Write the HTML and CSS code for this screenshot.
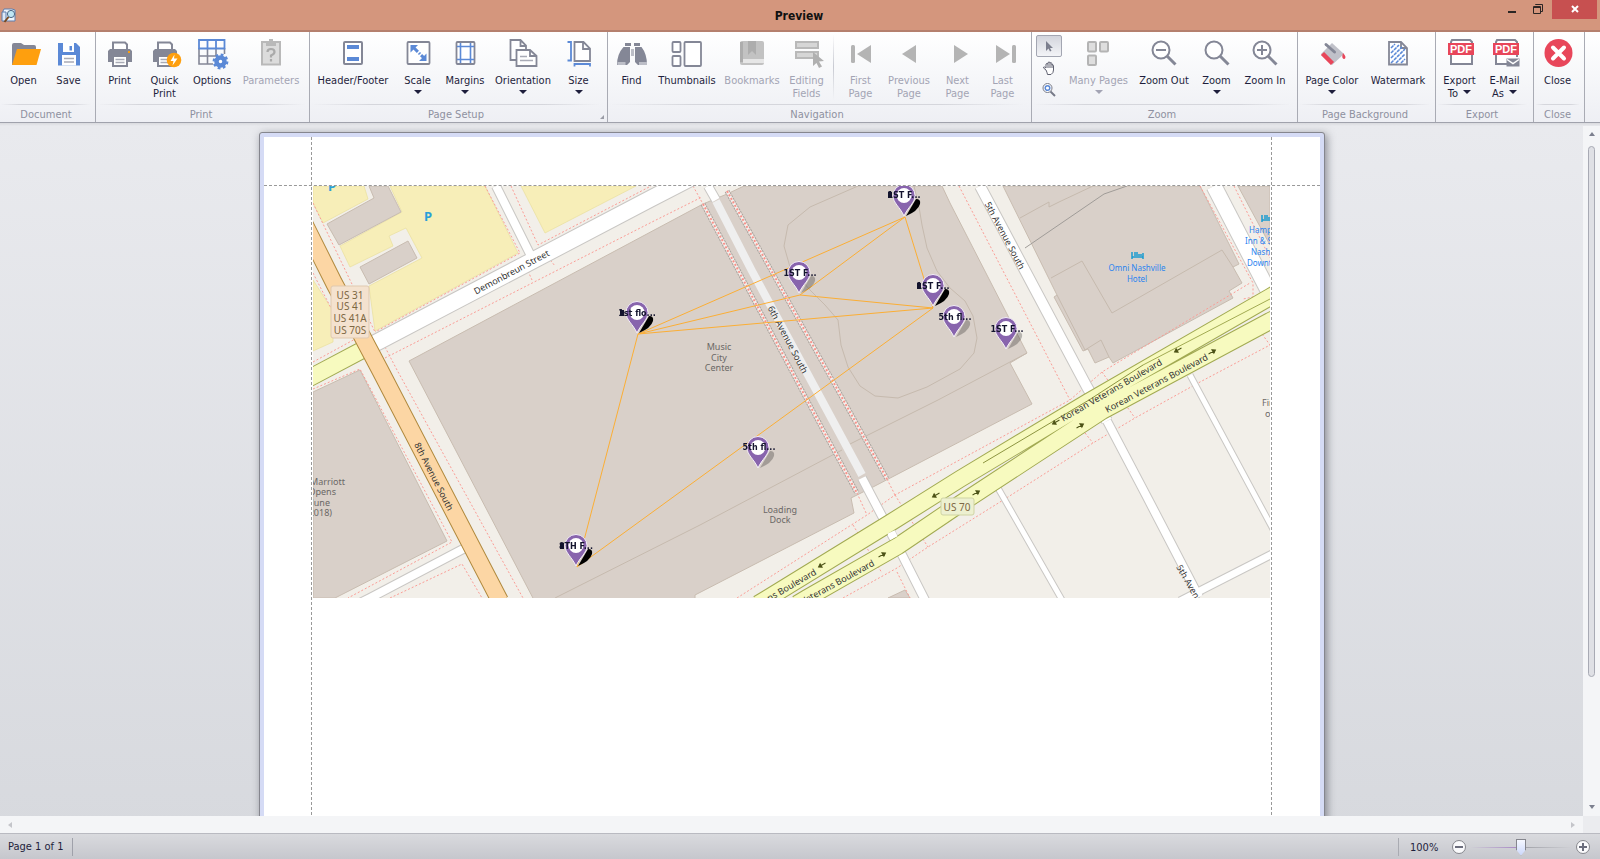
FILE: index.html
```html
<!DOCTYPE html>
<html lang="en">
<head>
<meta charset="utf-8">
<title>Preview</title>
<link rel="stylesheet" href="styles.css">
</head>
<body>
<div class="window">
<header class="titlebar">
  <svg class="app-icon" viewBox="0 0 16 16" aria-hidden="true"><path d="M3 1h8l3 1v11H2V3z" fill="#eef4fb" stroke="#5e7fae"/><path d="M1 4h4v9H1z" fill="#dfe9f6" stroke="#5e7fae"/><circle cx="10" cy="6" r="3.6" fill="#bfe6f4" stroke="#4a6685"/><path d="M7.5 9 3.5 14" stroke="#7a4a1e" stroke-width="2"/></svg>
  <h1 class="title">Preview</h1>
  <div class="window-buttons">
    <button class="wbtn" aria-label="Minimize"><svg viewBox="0 0 10 14"><path d="M1 12h8" stroke="#2b2624" stroke-width="2"/></svg></button>
    <button class="wbtn restore" aria-label="Restore"><svg viewBox="0 0 10 14"><path d="M2.500 5V4.500h7v7H8M.5 6.500h7v7h-7zM.5 7.500h7" fill="none" stroke="#2b2624"/></svg></button>
    <button class="wbtn wclose" aria-label="Close window"><svg viewBox="0 0 10 14"><path d="m2 6 6 6m0-6-6 6" stroke="#fff" stroke-width="2"/></svg></button>
  </div>
</header>

<nav class="ribbon" aria-label="Ribbon">
  <section class="group">
    <div class="tools">
      <button class="tool"><svg viewBox="0 0 32 32"><path d="M4 28V8q0-2 2-2h7l3 2h10q2 0 2 2v18z" fill="#848796"/><path d="M4 28 9 12h24l-4.500 16z" fill="#fe9f0e"/></svg><span>Open</span></button>
      <button class="tool"><svg viewBox="0 0 32 32"><path d="M5 6h18l4 4v18.500H5z" fill="#5b89d6"/><path d="M10 6h11v9H10zM9 18h14v10.500H9z" fill="#fff"/><path d="M16.500 9h2.500v4.500h-2.500z" fill="#5b89d6"/><path d="M11 21.500h10M11 25h10" stroke="#a9abb6" stroke-width="1.500"/></svg><span>Save</span></button>
    </div>
    <h2 class="caption">Document</h2>
  </section>
  <section class="group">
    <div class="tools">
      <button class="tool"><svg viewBox="0 0 32 32"><path d="M6 12h20l2 2v11H4V14z" fill="#848796"/><path d="M9 13V5.500h12l2 2V13zM9 19h14v10H9z" fill="#fff" stroke="#848796" stroke-width="2"/><path d="M11.500 22.500h9M11.500 25.500h9" stroke="#a9abb6" stroke-width="1.300"/><path d="M24 14h2v2h-2z" fill="#fe9f0e"/></svg><span>Print</span></button>
      <button class="tool"><svg viewBox="0 0 32 32"><path d="M6 12h20l2 2v11H4V14z" fill="#848796"/><path d="M9 13V5.500h12l2 2V13zM9 19h14v10H9z" fill="#fff" stroke="#848796" stroke-width="2"/><path d="M11.500 22.500h9M11.500 25.500h9" stroke="#a9abb6" stroke-width="1.300"/><circle cx="25" cy="23" r="7.300" fill="#fe9f0e"/><path d="m25.500 17.500-4 6.500h3l-1 4.500 5-7h-3.500z" fill="#fff"/></svg><span>Quick<br>Print</span></button>
      <button class="tool w50"><svg viewBox="0 0 32 32"><path d="M3 11v16h14M3 19h19M11.500 11v16M20 11v8M28.500 11v6" fill="none" stroke="#848796" stroke-width="1.600"/><path d="M3 3h25.500v8.500H3zM11.500 3v8M20 3v8" fill="none" stroke="#5b89d6" stroke-width="1.800"/><circle cx="24.500" cy="24.500" r="4" fill="#fff" stroke="#5b89d6" stroke-width="4.500"/><circle cx="24.500" cy="24.500" r="6.800" fill="none" stroke="#5b89d6" stroke-width="2.200" stroke-dasharray="2.800 2.540"/></svg><span>Options</span></button>
      <button class="tool w68" disabled><svg viewBox="0 0 32 32"><path d="M7 5h18v22.500H7z" fill="#dcdcdc" stroke="#b9b9b9" stroke-width="2"/><path d="M11 4h3V2h4v2h3v5H11z" fill="#b9b9b9"/><path d="M12.500 15q0-3 3.500-3t3.500 3q0 2-3.500 3.500v2M16 22v2.500" fill="none" stroke="#aaa" stroke-width="2.200"/></svg><span>Parameters</span></button>
    </div>
    <h2 class="caption">Print</h2>
  </section>
  <section class="group roomy">
    <div class="tools">
      <button class="tool w84"><svg viewBox="0 0 32 32"><rect x="7" y="5" width="18" height="22" rx="1" fill="#fff" stroke="#848796" stroke-width="2"/><path d="M10 10h12M10 22h12" stroke="#5b89d6" stroke-width="4"/></svg><span>Header/Footer</span></button>
      <button class="tool"><svg viewBox="0 0 32 32"><rect x="5.500" y="5" width="22" height="22" rx="1" fill="#fff" stroke="#848796" stroke-width="1.800"/><path d="m12 11 10 10" stroke="#5b89d6" stroke-width="3" stroke-dasharray="5.500 1.500 1.500 1.500 6"/><path d="M8.500 8h7.500l-7.500 7.500zM24.500 24H17l7.500-7.500z" fill="#5b89d6"/></svg><span>Scale</span><i class="arrow"></i></button>
      <button class="tool w50"><svg viewBox="0 0 32 32"><rect x="7.500" y="5" width="18" height="22" rx="1" fill="#fff" stroke="#848796" stroke-width="1.800"/><path d="M11.500 6v20M21.500 6v20M8 9.500h17M8 22.500h17" stroke="#5b89d6" stroke-width="1.600"/></svg><span>Margins</span><i class="arrow"></i></button>
      <button class="tool w66"><svg viewBox="0 0 32 32"><path d="M3.500 3h10l5.500 5.500V23H3.500zM13.500 3v6H19" fill="#fff" stroke="#848796" stroke-width="1.800"/><path d="M9.500 13h13.500l6.500 6v10h-20zM23 13v6h6" fill="#fff" stroke="#848796" stroke-width="1.800"/><path d="M13 19.500h7M13 23.500h13" stroke="#a9abb6" stroke-width="1.500"/></svg><span>Orientation</span><i class="arrow"></i></button>
      <button class="tool"><svg viewBox="0 0 32 32"><path d="M11.500 5h9l6.500 6.500V24H11.500zM20 5v7h7" fill="#fff" stroke="#848796" stroke-width="1.800"/><path d="M4.500 5H8v18.500H4.500M11.500 29.500V27H27v2.500" fill="none" stroke="#5b89d6" stroke-width="1.800"/></svg><span>Size</span><i class="arrow"></i></button>
    </div>
    <h2 class="caption">Page Setup</h2>
    <i class="launcher"></i>
  </section>
  <section class="group roomy">
    <div class="tools">
      <button class="tool"><svg viewBox="0 0 32 32"><path d="M9 6h6v3H9zM18 6h6v3h-6z" fill="#848796"/><path d="M7.500 10h6.500v15l-3 3H1q0-11 6.500-18zM19 10h6.500Q31 17 31 28H22l-3-3z" fill="#848796"/><path d="M15 12h3v7h-3zM1.500 25h8v3h-8zM23 25h8v3h-8z" fill="#bcbec7"/></svg><span>Find</span></button>
      <button class="tool w66"><svg viewBox="0 0 32 32"><g fill="#fff" stroke="#848796" stroke-width="1.800"><rect x="1.500" y="5" width="8" height="10" rx="1"/><rect x="1.500" y="19" width="8" height="10" rx="1"/><rect x="13.500" y="5" width="16.500" height="24" rx="1"/></g></svg><span>Thumbnails</span></button>
      <button class="tool w64" disabled><svg viewBox="0 0 32 32"><rect x="4" y="4" width="24" height="24" rx="2" fill="#c2c2c2"/><path d="M4 5h3v20H4zM12 4h8v14l-4-4-4 4z" fill="#adadad"/><path d="M7 22h21v4H7z" fill="#e6e6e6"/></svg><span>Bookmarks</span></button>
      <button class="tool" disabled><svg viewBox="0 0 32 32"><path d="M5 5h22v6H5zM5 15h22v6H5z" fill="#d6d6d6" stroke="#b9b9b9" stroke-width="2"/><path d="m22 15 11 9-5 .5 3 5-3 1.500-2.500-5-3.500 3z" fill="#b0b0b0"/></svg><span>Editing<br>Fields</span></button>
      <i class="divider"></i>
      <button class="tool" disabled><svg viewBox="0 0 32 32"><rect x="6" y="8" width="4" height="18" rx="1.500" fill="#b4b4b4"/><path d="M26 8v18L12 17z" fill="#b4b4b4"/></svg><span>First<br>Page</span></button>
      <button class="tool w52" disabled><svg viewBox="0 0 32 32"><path d="M23 8v18L9 17z" fill="#b4b4b4"/></svg><span>Previous<br>Page</span></button>
      <button class="tool" disabled><svg viewBox="0 0 32 32"><path d="M12 8v18l14-9z" fill="#b4b4b4"/></svg><span>Next<br>Page</span></button>
      <button class="tool" disabled><svg viewBox="0 0 32 32"><rect x="25" y="8" width="4" height="18" rx="1.500" fill="#b4b4b4"/><path d="M9 8v18l14-9z" fill="#b4b4b4"/></svg><span>Last<br>Page</span></button>
    </div>
    <h2 class="caption">Navigation</h2>
  </section>
  <section class="group roomy">
    <div class="tools">
      <div class="modes">
        <button class="mode active" aria-label="Pointer"><svg viewBox="0 0 16 16"><path d="M5 3v10l2.500-2.500 1.500 3 1.500-.7-1.500-2.800h3z" fill="#7c7f8e"/></svg></button>
        <button class="mode" aria-label="Hand tool"><svg viewBox="0 0 16 16"><path d="M5 10 2.500 8Q2 7 3.500 7L5 8V4q1-1 2 0V2.500q1-1 2 0V3q1-1 2 .5V5q1.500-.5 1.500.5V10q0 3-2.500 4.500H6.500Q6 12 5 10zM7 4v4M9 3v5M11 4v4" fill="#fff" stroke="#5f6170"/></svg></button>
        <button class="mode" aria-label="Magnifier"><svg viewBox="0 0 16 16"><circle cx="6.500" cy="6" r="4.500" fill="#fff" stroke="#777a88"/><circle cx="6.500" cy="6" r="2.300" fill="none" stroke="#5b89d6" stroke-width="1.500"/><path d="m9.500 9.500 4.500 4.500" stroke="#777a88" stroke-width="2"/></svg></button>
      </div>
      <button class="tool w71" disabled><svg viewBox="0 0 32 32"><g fill="#dedede" stroke="#b4b4b4" stroke-width="2"><rect x="5" y="5" width="8" height="9.500" rx="1"/><rect x="17" y="5" width="8" height="9.500" rx="1"/><rect x="5" y="18.500" width="8" height="9.500" rx="1"/></g></svg><span>Many Pages</span><i class="arrow"></i></button>
      <button class="tool w60"><svg viewBox="0 0 32 32"><circle cx="13" cy="13" r="8.500" fill="#fff" stroke="#848796" stroke-width="2"/><path d="m19 19 8.500 8.500" stroke="#848796" stroke-width="3"/><path d="M8 13h10" stroke="#848796" stroke-width="2"/></svg><span>Zoom Out</span></button>
      <button class="tool"><svg viewBox="0 0 32 32"><circle cx="13" cy="13" r="8.500" fill="#fff" stroke="#848796" stroke-width="2"/><path d="m19 19 8.500 8.500" stroke="#848796" stroke-width="3"/></svg><span>Zoom</span><i class="arrow"></i></button>
      <button class="tool w52"><svg viewBox="0 0 32 32"><circle cx="13" cy="13" r="8.500" fill="#fff" stroke="#848796" stroke-width="2"/><path d="m19 19 8.500 8.500" stroke="#848796" stroke-width="3"/><path d="M8 13h10M13 8v10" stroke="#848796" stroke-width="2"/></svg><span>Zoom In</span></button>
    </div>
    <h2 class="caption">Zoom</h2>
  </section>
  <section class="group">
    <div class="tools">
      <button class="tool w66"><svg viewBox="0 0 32 32"><path d="m16 6 12 11-12 11L5 17z" fill="#c0c1c9"/><path d="m6.500 16.500 10 10" stroke="#e8465a" stroke-width="4.500"/><path d="m10 7.500 8.500 7.500" stroke="#848796" stroke-width="3" stroke-linecap="round"/><path d="M27 16q4 4 1.500 6-3.500 0-1.500-6z" fill="#e8465a"/></svg><span>Page Color</span><i class="arrow"></i></button>
      <button class="tool w66"><svg viewBox="0 0 32 32"><path d="M7 5h12l6 6v16.500H7zM19 5v6h6" fill="#fff" stroke="#848796" stroke-width="1.800"/><path d="m9 11 4-4M9 16l8-8M9 21 20 10M9 26l14-14M14 26l9-9M19 26l4-4" stroke="#5b89d6" stroke-width="1.600" stroke-dasharray="3.500 .8"/></svg><span>Watermark</span></button>
    </div>
    <h2 class="caption">Page Background</h2>
  </section>
  <section class="group roomy">
    <div class="tools">
      <button class="tool"><svg viewBox="0 0 32 32"><path d="M8 3h18l2 2v22H7V5z" fill="#fff" stroke="#848796" stroke-width="2"/><path d="M4 6h26v12H4z" fill="#e8465a"/><text x="17" y="15.500" class="pdf">PDF</text></svg><span>Export<br>To <i class="arrow side"></i></span></button>
      <button class="tool"><svg viewBox="0 0 32 32"><path d="M18 27H7V5l1-2h18l2 2v15" fill="#fff" stroke="#848796" stroke-width="2"/><path d="M4 6h26v12H4z" fill="#e8465a"/><text x="17" y="15.500" class="pdf">PDF</text><path d="M17.500 21.500h13v8h-13z" fill="#848796"/><path d="m18 22.500 6 4 6-4" fill="none" stroke="#fff" stroke-width="1.500"/></svg><span>E-Mail<br>As <i class="arrow side"></i></span></button>
    </div>
    <h2 class="caption">Export</h2>
  </section>
  <section class="group">
    <div class="tools">
      <button class="tool"><svg viewBox="0 0 32 32"><circle cx="16.500" cy="16" r="14" fill="#e8465a"/><path d="m11 10.500 11 11m0-11-11 11" stroke="#fff" stroke-width="4" stroke-linecap="round"/></svg><span>Close</span></button>
    </div>
    <h2 class="caption">Close</h2>
  </section>
</nav>

<main class="workspace">
  <div class="canvas">
    <article class="sheet">
      <i class="margin-line left"></i><i class="margin-line right"></i><i class="margin-line top"></i>
      <svg class="map" viewBox="313 186 957 412" role="img" aria-label="Map of downtown Nashville">
        <defs>
          <g id="pin"><path d="M0 0C-4-9-11-13-11-20.500a11 11 0 0 1 22 0C11-13 4-9 0 0z" fill="#8864ad" stroke="#f4eff8"/><circle cy="-20.500" r="7.500" fill="#fff"/></g>
          <path id="shade" d="M2 0 12-17q5 0 4 5Q14-5 2 0z"/>
          <path id="way" d="M-4 0h8M4 0 1-2v4z" fill="#4c5216" stroke="#4c5216"/>
        </defs>
        <path d="M313 186h957v412H313z" fill="#f2efe9"/>
        <g fill="#f7eeb8" stroke="#eadf9c" stroke-width=".7">
          <path d="M313 186h51l4 13-45 24-10-20zM390 186h95l33 67-143 78-6-45 53-28-16-30-17 8 4 10-43 21-10-21 62-34zM313 280l20 31v31l-20 9zM521 186h115l-91 47z"/>
        </g>
        <g class="building">
          <path d="M327 224l47-26-5-12h19l13 26-62 33zM360 267l48-26 9 17-48 26z"/>
          <path d="M409 361l294-157 24-10 17-8h198l8 17 77 150-17 10 22 41-159 83-22 11 3 15-159 82v5H534z"/>
          <path d="M1003 186l54 109-3 2 29 54 5-2 7 14 14-6 4 6 120-65-4-7 13-8-9-16 6-3-39-78zM1238 186h32v59zM313 392l47-22 87 171-112 57h-22zM888 598l17-8 5 8z"/>
        </g>
        <g class="inner">
          <path d="M555 598l145-73 142-75M850 444l88-44 89-47M1051 278l31-17 30 52 110-63 11 17M1020 218l29-16v5l10-5 34-16M1057 295l28 55 16-10 8 17"/>
          <path d="M858 186l-48 21-22 18-4 21 6 21 20 23 15 15 13 15 3 25 7 22 12 19 15 10 23 2 29-11 33-18 14-16 3-15-4-22-8-15-15-13-13-17-10-23-5-23-3-18-5-21"/>
          <path d="M1025 248l79-54 23-8" class="wire"/>
        </g>
        <g class="walk">
          <path d="M313 203l62 129M313 273l18 35M485 186l35 67-145 79M511 186l27 59 113-59M385 358l267-136 50-25M693 186l10 18M313 362l44-24M385 347l12 23 126 228M313 389l47-20 92 173-104 56M390 598l72-34 20 34M528 271l4 9M548 257l7 9"/>
          <path d="M959 186l111 214M737 598l130-83 28-20 175-95 32-28 148-89M1200 186l53 97v14l-10 2M1234 186l36 72M843 598l54-30 31-21 80-50 85-54 42-25 65-36 70-37-13-18M853 525l29 48M895 495l33 52M897 572l13 26M1102 372l33 46M857 493l10 22M887 479l8 16M1085 433l8 10"/>
        </g>
        <g class="tunnel">
          <path class="edge" d="M703 204l120 226 34 63M727 191l133 239 27 49"/>
          <path class="bed" d="M703 204l120 226 34 63M727 191l133 239 27 49"/>
          <path class="dots" d="M703 204l120 226 34 63M727 191l133 239 27 49"/>
        </g>
        <g class="road casing">
          <path d="M366 348l284-149 60-31" stroke-width="18"/><path d="M496 186l34 68M465 548l-95 50-20 10" stroke-width="10"/>
          <path d="M1214 186l56 108" stroke-width="17"/><path d="M980 186l107 201 20 34" stroke-width="12"/><path d="M1107 421l40 76 52 100" stroke-width="10"/>
          <path d="M1190 375l84 156M998 488l64 112" stroke-width="7"/><path d="M1180 601l100-51" stroke-width="9"/><path d="M708 186l8 14M862 478l31 59 34 67" stroke-width="10"/>
        </g>
        <g class="road white">
          <path d="M366 348l284-149 60-31" stroke-width="16"/><path d="M496 186l34 68M465 548l-95 50-20 10" stroke-width="8"/>
          <path d="M1214 186l56 108" stroke-width="15"/><path d="M980 186l107 201 20 34" stroke-width="10"/><path d="M1107 421l40 76 52 100" stroke-width="8"/>
          <path d="M1190 375l84 156M998 488l64 112" stroke-width="5"/><path d="M1180 601l100-51" stroke-width="7"/><path d="M708 186l8 14M862 478l31 59 34 67" stroke-width="8"/>
          <path d="M716 201l36 70 110 204" stroke="#efefef" stroke-width="8"/>
        </g>
        <g class="road">
          <path d="M300 383l68-36M758 604l10-6 122-75 70-44 128-77 182-105 10-6M797 604l10-6 91-52 62-42 142-93 168-90 10-5" stroke="#a2aa52" stroke-width="18"/>
          <path d="M300 383l68-36M758 604l10-6 122-75 70-44 128-77 182-105 10-6M797 604l10-6 91-52 62-42 142-93 168-90 10-5" stroke="#f7fabf" stroke-width="16"/>
          <path d="M983 463l106-63 54-35" stroke="#8c9440" stroke-width="1"/><path d="M1143 365l127-66" stroke="#a2aa52" stroke-width="1"/>
          <path d="M295 205l39 78 46 87 120 231" stroke="#b0893d" stroke-width="18"/>
          <path d="M295 205l39 78 46 87 120 231" stroke="#fcd6a4" stroke-width="16"/>
          <path d="M891 532l3 6" stroke="#fff" stroke-width="8"/>
        </g>
        <use href="#way" transform="translate(822 565) rotate(150)"/><use href="#way" transform="translate(882 555) rotate(-30)"/>
        <use href="#way" transform="translate(936 495) rotate(150)"/><use href="#way" transform="translate(976 493) rotate(-30)"/>
        <use href="#way" transform="translate(1056 422) rotate(150)"/><use href="#way" transform="translate(1080 426) rotate(-30)"/>
        <use href="#way" transform="translate(1178 350) rotate(150)"/><use href="#way" transform="translate(1212 352) rotate(-30)"/>
        <g class="street">
          <text transform="translate(513 275) rotate(-28)">Demonbreun Street</text>
          <text transform="translate(431 478) rotate(63)">8th Avenue South</text>
          <text transform="translate(785 341) rotate(62)">6th Avenue South</text>
          <text transform="translate(1002 237) rotate(62)">5th Avenue South</text>
          <text transform="translate(1176 567) rotate(60)" class="from">5th Avenue South</text>
          <text transform="translate(1113 393) rotate(-30)">Korean Veterans Boulevard</text>
          <text transform="translate(1158 386) rotate(-28)">Korean Veterans Boulevard</text>
          <text transform="translate(817 574) rotate(-30)" class="to">Korean Veterans Boulevard</text>
          <text transform="translate(875 565) rotate(-29)" class="to">Korean Veterans Boulevard</text>
        </g>
        <g class="place">
          <text x="719" y="350">Music</text><text x="719" y="361">City</text><text x="719" y="371">Center</text>
          <text x="780" y="513">Loading</text><text x="780" y="523">Dock</text>
          <g class="to"><text x="345" y="485">Marriott</text><text x="336" y="495">Opens</text><text x="330" y="506">June</text><text x="332" y="516">(2018)</text></g>
        </g>
        <g class="hotel">
          <text x="1137" y="271">Omni Nashville</text><text x="1137" y="282">Hotel</text>
          <g class="from"><text x="1249" y="233">Hampton</text><text x="1245" y="244">Inn &amp; Suites</text><text x="1251" y="255">Nashville</text><text x="1247" y="266">Downtown</text></g>
          <path d="M1132 252v7m0-2h11m0 2v-6M1134 255h8M1134 253h4M1262 215v7m0-2h11M1264 218h8M1264 216h4" fill="none" stroke="#1a9bd0" stroke-width="1.500"/>
        </g>
        <g class="place from"><text x="1262" y="406">First</text><text x="1265" y="417">of</text></g>
        <text x="424" y="221" class="parking">P</text><text x="328" y="191" class="parking">P</text>
        <g class="shield">
          <rect x="331" y="286" width="38" height="52" rx="2" fill="#f4e2cf" stroke="#e0c9b0"/>
          <text x="350" y="299">US 31</text><text x="350" y="310">US 41</text><text x="350" y="322">US 41A</text><text x="350" y="334">US 70S</text>
          <rect x="941" y="498" width="33" height="17" rx="2" fill="#edf0d0" stroke="#cfd4a4"/><text x="957" y="511">US 70</text>
        </g>
        <path d="M638 334l267-117-105 78-162 39 295-26-28-91M800 295l133 13-356 259 61-233" fill="none" stroke="#fbae35"/>
        <g>
          <use href="#shade" x="904" y="216"/><use href="#shade" x="933" y="306"/><use href="#shade" x="637" y="333"/><use href="#shade" x="576" y="566"/>
          <g opacity=".25"><use href="#shade" x="799" y="293"/><use href="#shade" x="954" y="337"/><use href="#shade" x="1006" y="349"/><use href="#shade" x="758" y="468"/></g>
          <use href="#pin" x="904" y="216"/><use href="#pin" x="799" y="293"/><use href="#pin" x="933" y="306"/><use href="#pin" x="954" y="337"/>
          <use href="#pin" x="1006" y="349"/><use href="#pin" x="758" y="468"/><use href="#pin" x="637" y="333"/><use href="#pin" x="576" y="566"/>
          <path d="M888 192h4v6h-4zM917 283h4v6h-4zM620 310h4v6h-4zM560 543h4v6h-4z" fill="#14142e"/>
        </g>
        <g class="pin-label">
          <text x="904" y="198">1ST F...</text><text x="800" y="276">1ST F...</text><text x="933" y="289">1ST F...</text><text x="955" y="320">5th fl...</text>
          <text x="1007" y="332">1ST F...</text><text x="759" y="450">5th fl...</text><text x="637" y="316">1st flo...</text><text x="576" y="549">8TH F...</text>
        </g>
      </svg>
    </article>
  </div>
  <div class="vscroll"><button class="sbtn up" aria-label="Scroll up"></button><div class="thumb"></div><button class="sbtn down" aria-label="Scroll down"></button></div>
  <div class="hscroll"><button class="sbtn back" aria-label="Scroll left"></button><button class="sbtn forward" aria-label="Scroll right"></button></div>
  <div class="corner"></div>
</main>

<footer class="status">
  <span class="pages">Page 1 of 1</span>
  <div class="zoom">
    <label for="zoom" class="percent">100%</label>
    <button class="round" aria-label="Decrease zoom"><svg viewBox="0 0 16 16"><circle cx="8" cy="8" r="6.500" fill="#fafafc" stroke="#85868c"/><path d="M4 8h8" stroke="#6b6d7c" stroke-width="2"/></svg></button>
    <input id="zoom" type="range" min="0" max="100" value="50">
    <button class="round" aria-label="Increase zoom"><svg viewBox="0 0 16 16"><circle cx="8" cy="8" r="6.500" fill="#fafafc" stroke="#85868c"/><path d="M4 8h8M8 4v8" stroke="#6b6d7c" stroke-width="2"/></svg></button>
  </div>
</footer>
</div>
</body>
</html>
```

FILE: styles.css
```css
* { box-sizing: border-box; }
body {
  margin: 0;
  font: 11px/13px "DejaVu Sans Condensed", "DejaVu Sans", sans-serif;
  color: #1e1e3c;
}
button {
  margin: 0;
  padding: 0;
  border: 0;
  background: none;
  font: inherit;
  color: inherit;
}
.window {
  display: flex;
  flex-direction: column;
  height: 100vh;
  overflow: hidden;
}

/* Title bar */
.titlebar {
  display: grid;
  grid-template-columns: 1fr auto 1fr;
  flex: none;
  height: 32px;
  background: #d4967d;
  border-bottom: 2px solid #b5806e;
}
.app-icon { width: 16px; height: 16px; margin: 8px 0 0 1px; }
.title {
  margin: 9px 2px 0 0;
  font-size: 12px;
  line-height: 14px;
  font-weight: bold;
  color: #111;
}
.window-buttons { display: flex; justify-content: flex-end; padding-right: 3px; }
.wbtn { width: 26px; height: 19px; display: flex; justify-content: center; }
.wbtn svg { width: 10px; height: 14px; }
.wbtn.restore { margin-right: 1px; }
.wclose { width: 45px; background: #c75050; }

/* Ribbon */
.ribbon {
  display: flex;
  flex: none;
  height: 91px;
  background: linear-gradient(#ffffff, #f7f8fa 45%, #eeeff4);
  border-bottom: 1px solid #a0a2ac;
}
.group {
  position: relative;
  display: flex;
  flex-direction: column;
  padding: 0 4px 0 1px;
  border-right: 1px solid #a9abb4;
}
.group.roomy { padding-right: 6px; }
.tools { display: flex; flex: 1; }
.tool {
  display: flex;
  flex-direction: column;
  align-items: center;
  flex: none;
  width: 45px;
  padding-top: 5px;
  text-align: center;
  white-space: nowrap;
}
.tool svg { flex: none; width: 32px; height: 32px; margin-bottom: 5px; overflow: visible; }
.tool:disabled { color: #a3a4b4; }
.w50 { width: 50px; }
.w52 { width: 52px; }
.w60 { width: 60px; }
.w64 { width: 64px; }
.w66 { width: 66px; }
.w68 { width: 68px; }
.w71 { width: 71px; }
.w84 { width: 84px; }
.arrow {
  width: 0;
  height: 0;
  margin-top: 3px;
  border: 4px solid transparent;
  border-top-color: currentColor;
  border-bottom: 0;
}
.arrow.side { display: inline-block; margin: 0 0 3px 2px; }
.caption {
  margin: 0;
  height: 18px;
  padding-top: 3px;
  font-size: 11px;
  line-height: 15px;
  font-weight: normal;
  text-align: center;
  color: #8e90a0;
  background: linear-gradient(90deg, transparent, #d5d6dc 20%, #d5d6dc 80%, transparent) top / 100% 1px no-repeat;
}
.launcher {
  position: absolute;
  right: 3px;
  bottom: 3px;
  border: 2px solid #9a9ca6;
  border-top-color: transparent;
  border-left-color: transparent;
}
.divider { flex: none; width: 1px; height: 66px; margin: 2px 4px; background: linear-gradient(transparent, #c8cad2, transparent); }
.modes { display: flex; flex-direction: column; width: 30px; padding: 3px 0 0 3px; }
.mode { display: flex; align-items: center; justify-content: center; width: 26px; height: 22px; }
.mode svg { width: 16px; height: 16px; }
.mode.active { border: 1px solid #a3a6b2; border-radius: 2px; background: linear-gradient(#d3d5dd, #f3f4f7); }
.pdf { font: bold 11px "Liberation Sans", sans-serif; fill: #fff; text-anchor: middle; }

/* Document area */
.workspace {
  display: grid;
  grid-template-columns: minmax(0, 1fr) 17px;
  grid-template-rows: minmax(0, 1fr) 17px;
  flex: 1;
  min-height: 0;
  background: linear-gradient(#d9dade, #e9eaee 3px, #d7d9de);
}
.canvas { overflow: hidden; padding-top: 10px; }
.sheet {
  position: relative;
  width: 1064px;
  height: 826px;
  margin: 0 auto;
  padding: 49px 48px;
  background: #fff;
  border: 4px solid #d5dbf5;
  outline: 1px solid #85868e;
  border-radius: 2px;
  box-shadow: 2px 2px 8px 1px rgba(60, 62, 75, .55);
}
.margin-line { position: absolute; }
.margin-line.left { top: 0; bottom: 0; left: 47px; border-left: 1px dashed #999; }
.margin-line.right { top: 0; bottom: 0; right: 48px; border-left: 1px dashed #999; }
.margin-line.top { left: 0; right: 0; top: 48px; border-top: 1px dashed #999; z-index: 1; }
.map { display: block; width: 957px; max-width: 100%; margin-left: 1px; }

.vscroll { display: flex; flex-direction: column; align-items: center; background: #f4f5f7; margin-top: 3px; }
.hscroll { display: flex; justify-content: space-between; align-items: center; background: #f4f5f7; padding: 0 5px; }
.corner { background: #ebecef; }
.thumb { width: 7px; flex: 1; margin: 10px 0 128px; border: 1px solid #a8aab4; border-radius: 4px; background: #dfe0e5; }
.sbtn { flex: none; border: 3px solid transparent; }
.sbtn.up { margin-top: 3px; border-bottom: 4px solid #7c7f8e; }
.sbtn.down { margin-bottom: 4px; border-top: 4px solid #7c7f8e; }
.sbtn.back { border-right: 4px solid #c4c5ca; }
.sbtn.forward { border-left: 4px solid #c4c5ca; }

/* Map drawing */
.map text { font-family: "Noto Sans", "Open Sans", sans-serif; font-size: 9px; }
.building { fill: #d9d0c9; stroke: #c8bcb0; stroke-width: 1; }
.inner { fill: none; stroke: #c6baae; }
.wire { stroke: #a09c98; }
.walk { fill: none; stroke: #fb9d96; stroke-dasharray: 2 2; }
.tunnel { fill: none; }
.edge { stroke: #a8a29c; stroke-width: 5; stroke-dasharray: 2 1; }
.bed { stroke: #f5f0ed; stroke-width: 3; }
.dots { stroke: #f7938b; stroke-width: 2; stroke-dasharray: 2 2; }
.road { fill: none; stroke-linejoin: round; }
.casing { stroke: #c9c7c4; }
.white { stroke: #fff; }
.street { fill: #333; text-anchor: middle; }
.place { fill: #6b6866; text-anchor: middle; }
.hotel { fill: #2a84f0; text-anchor: middle; }
.map .hotel text { font-size: 8px; }
.map .from { text-anchor: start; }
.map .to { text-anchor: end; }
.map .parking { font-size: 13px; font-weight: bold; fill: #2a9fd8; }
.shield { fill: #7d6742; text-anchor: middle; }
.map .shield text { font-size: 10px; }
.pin-label { fill: #14142e; text-anchor: middle; }
.map .pin-label text { font-size: 8px; font-weight: bold; font-family: "DejaVu Sans", sans-serif; }

/* Status bar */
.status {
  display: flex;
  justify-content: space-between;
  align-items: center;
  flex: none;
  height: 26px;
  padding: 1px 9px 0 8px;
  border-top: 1px solid #b9bac1;
  background: linear-gradient(#d9dade, #c6c7cd);
}
.pages { padding-right: 9px; border-right: 1px solid #9fa1aa; line-height: 18px; }
.zoom { display: flex; align-items: center; padding-left: 11px; border-left: 1px solid #a9abb2; height: 18px; }
.percent { width: 41px; }
.round { width: 16px; height: 16px; }
.round svg { display: block; width: 16px; height: 16px; }
#zoom {
  appearance: none;
  width: 102px;
  height: 18px;
  margin: 0 3px;
  background: linear-gradient(90deg, transparent, #a684c4 50%, #a0a1a8 51%, transparent) center / 100% 1px no-repeat;
}
#zoom::-webkit-slider-thumb {
  appearance: none;
  width: 10px;
  height: 17px;
  border: 1px solid #85868e;
  background: linear-gradient(#f6f8ff, #ccd8fb);
  clip-path: polygon(0 0, 100% 0, 100% 65%, 50% 100%, 0 65%);
}
```
